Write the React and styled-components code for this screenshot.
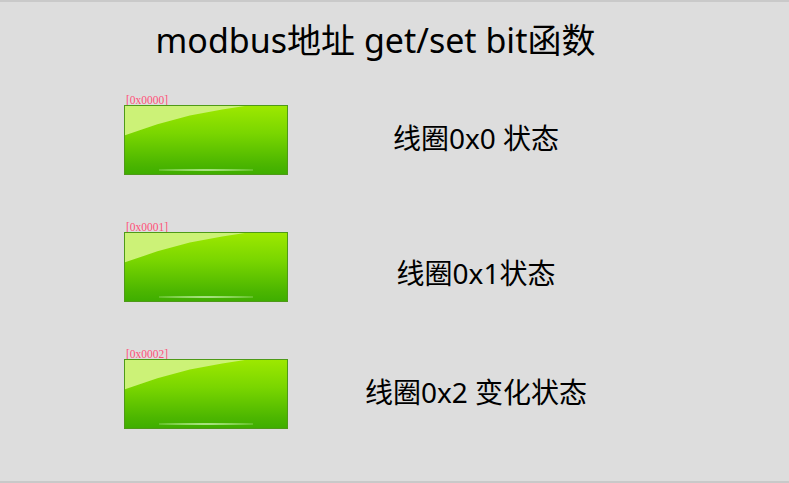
import React from 'react';
import styled, { createGlobalStyle } from 'styled-components';

const GlobalStyle = createGlobalStyle`
  html, body {
    margin: 0;
    padding: 0;
    background: #dddddd;
  }
  body {
    font-family: "Noto Sans", "Noto Sans CJK SC", sans-serif;
  }
`;

const coils = [
  { addr: '[0x0000]', text: '线圈0x0 状态', shift: -2 },
  { addr: '[0x0001]', text: '线圈0x1状态', shift: 6 },
  { addr: '[0x0002]', text: '线圈0x2 变化状态', shift: -2 },
];

function App() {
  return (
    <>
      <GlobalStyle />
      <Screen>
        <Title>modbus地址 get/set bit函数</Title>
        <List>
          {coils.map((c) => (
            <Row key={c.addr}>
              <Cell>
                <Addr>{c.addr}</Addr>
                <GlossButton type='button' />
              </Cell>
              <State $shift={c.shift}>{c.text}</State>
            </Row>
          ))}
        </List>
      </Screen>
    </>
  );
}

const Screen = styled.div`
  box-sizing: border-box;
  width: 789px;
  height: 483px;
  border-top: 2px solid #c9c9c9;
  border-bottom: 2px solid #c9c9c9;
  background: #dddddd;
  display: flex;
  flex-direction: column;
`;

const Title = styled.h1`
  margin: 0;
  padding: 15px 38px 0 0;
  height: 46px;
  text-align: center;
  font-family: "Noto Sans", "Noto Sans CJK SC", sans-serif;
  font-weight: 400;
  font-size: 34px;
  line-height: 46px;
  color: #000;
  white-space: nowrap;
`;

const List = styled.div`
  display: flex;
  flex-direction: column;
  gap: 47px;
  padding: 32px 125px 0 124px;
`;

const Row = styled.div`
  display: grid;
  grid-template-columns: 164px 1fr;
  align-items: end;
`;

const Cell = styled.div`
  display: flex;
  flex-direction: column;
`;

const Addr = styled.span`
  font-family: "Liberation Serif", serif;
  font-size: 11.5px;
  line-height: 10px;
  color: #ff5078;
  padding-left: 2px;
`;

const GlossButton = styled.button`
  position: relative;
  box-sizing: border-box;
  width: 164px;
  height: 70px;
  padding: 0;
  border: 1px solid #4e9a18;
  background: linear-gradient(to bottom, #9de800 0%, #7ad600 40%, #4cb600 85%, #3fae00 100%);
  overflow: hidden;
  cursor: pointer;

  &::before {
    content: '';
    position: absolute;
    inset: 0;
    background: #ccf277;
    clip-path: polygon(0 0, 74% 0, 60% 5%, 40% 14%, 20% 27%, 0 43%);
  }

  &::after {
    content: '';
    position: absolute;
    left: 21%;
    right: 21%;
    bottom: 3px;
    height: 2px;
    background: radial-gradient(ellipse at center, rgba(255, 255, 255, 1) 0%, rgba(225, 255, 200, 0.55) 40%, rgba(120, 200, 60, 0) 100%);
  }
`;

const State = styled.div`
  align-self: center;
  margin-top: ${(p) => 10 + p.$shift * 2}px;
  text-align: center;
  font-family: "Noto Sans", "Noto Sans CJK SC", sans-serif;
  font-size: 28px;
  line-height: 34px;
  color: #000;
  white-space: nowrap;
`;

export default App;
